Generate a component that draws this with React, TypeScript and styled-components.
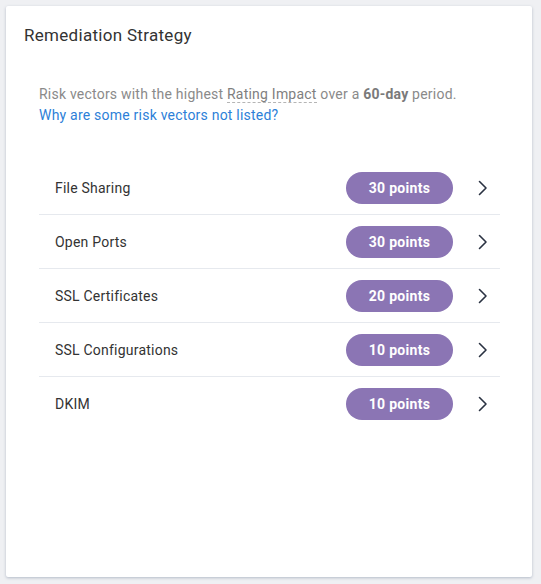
import React from "react";
import styled, { createGlobalStyle } from "styled-components";

const GlobalStyle = createGlobalStyle`
    html, body {
        margin: 0;
        padding: 0;
        background: #eff0f3;
    }
    body {
        font-family: Roboto, "Liberation Sans", sans-serif;
        -webkit-font-smoothing: antialiased;
    }
`;

const Page = styled.div`
    padding: 6px 9px 7px 6px;
`;

const Card = styled.div`
    background: #ffffff;
    height: 571px;
    box-sizing: border-box;
    border-radius: 2px;
    box-shadow: 0 1px 3px rgba(70, 90, 120, 0.35);
    padding: 19px 0 0 0;
`;

const Title = styled.h2`
    margin: 0;
    padding: 0 18px;
    font-size: 17px;
    font-weight: 400;
    line-height: 20px;
    letter-spacing: 0.3px;
    color: #333333;
`;

const Body = styled.div`
    padding: 39px 32px 0 33px;
`;

const Description = styled.p`
    margin: 0;
    font-size: 14px;
    line-height: 21px;
    letter-spacing: 0.22px;
    color: #8a8a8a;

    & strong {
        font-weight: 700;
        color: #7a7a7a;
    }
`;

const Term = styled.span`
    color: #7f7f7f;
    border-bottom: 1px dashed #b5b5b5;
`;

const HelpLink = styled.a`
    display: block;
    color: #2d7fd8;
    text-decoration: none;
    cursor: pointer;
`;

const VectorList = styled.ul`
    list-style: none;
    margin: 35px 0 0 0;
    padding: 0;
`;

const VectorRow = styled.li<{ $last?: boolean }>`
    display: flex;
    align-items: center;
    height: 54px;
    box-sizing: border-box;
    padding: 0 12px 0 16px;
    border-bottom: ${(p) => (p.$last ? "none" : "1px solid #e6e9ee")};
    cursor: pointer;
`;

const VectorName = styled.span`
    flex: 1;
    font-size: 14px;
    letter-spacing: 0.22px;
    color: #333333;
`;

const PointsPill = styled.span`
    display: inline-flex;
    align-items: center;
    justify-content: center;
    width: 107px;
    height: 32px;
    border-radius: 16px;
    background: #8b75b4;
    color: #ffffff;
    font-size: 14px;
    font-weight: 700;
    letter-spacing: 0.3px;
    margin-right: 25px;
`;

const Chevron = () => (
    <svg width="10" height="16" viewBox="0 0 10 16" fill="none">
        <path d="M1.5 1.5 L8 8 L1.5 14.5" stroke="#2a3242" strokeWidth="1.6" strokeLinecap="round" strokeLinejoin="round" />
    </svg>
);

const vectors = [
    { name: "File Sharing", points: 30 },
    { name: "Open Ports", points: 30 },
    { name: "SSL Certificates", points: 20 },
    { name: "SSL Configurations", points: 10 },
    { name: "DKIM", points: 10 },
];

const App = () => {
    return (
        <>
            <GlobalStyle />
            <Page>
                <Card>
                    <Title>Remediation Strategy</Title>
                    <Body>
                        <Description>
                            Risk vectors with the highest <Term>Rating Impact</Term> over a <strong>60-day</strong> period.
                            <HelpLink>Why are some risk vectors not listed?</HelpLink>
                        </Description>
                        <VectorList>
                            {vectors.map((v, i) => (
                                <VectorRow key={v.name} $last={i === vectors.length - 1}>
                                    <VectorName>{v.name}</VectorName>
                                    <PointsPill>{v.points} points</PointsPill>
                                    <Chevron />
                                </VectorRow>
                            ))}
                        </VectorList>
                    </Body>
                </Card>
            </Page>
        </>
    );
};

export default App;
